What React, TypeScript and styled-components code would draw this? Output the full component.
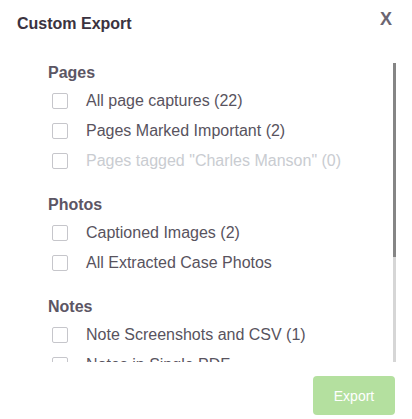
import { useLayoutEffect, useRef, useState } from 'react';
import styled, { createGlobalStyle } from 'styled-components';

interface ExportOption {
  label: string;
  disabled?: boolean;
}

interface ExportGroup {
  title: string;
  options: ExportOption[];
}

const groups: ExportGroup[] = [
  {
    title: 'Pages',
    options: [
      { label: 'All page captures (22)' },
      { label: 'Pages Marked Important (2)' },
      { label: 'Pages tagged "Charles Manson" (0)', disabled: true },
    ],
  },
  {
    title: 'Photos',
    options: [
      { label: 'Captioned Images (2)' },
      { label: 'All Extracted Case Photos' },
    ],
  },
  {
    title: 'Notes',
    options: [
      { label: 'Note Screenshots and CSV (1)' },
      { label: 'Notes in Single PDF' },
    ],
  },
  {
    title: 'Reports',
    options: [
      { label: 'Case Summary PDF' },
      { label: 'Timeline CSV' },
      { label: 'Activity Log' },
    ],
  },
];

function App() {
  const listRef = useRef<HTMLDivElement>(null);
  const [thumb, setThumb] = useState({ top: 0, height: 194 });

  const measure = () => {
    const el = listRef.current;
    if (!el) return;
    const ratio = el.clientHeight / el.scrollHeight;
    setThumb({
      top: el.scrollTop * ratio,
      height: Math.min(el.clientHeight, el.clientHeight * ratio),
    });
  };

  useLayoutEffect(measure, []);

  return (
    <>
      <GlobalStyle />
      <Modal>
        <Header>
          <Title>Custom Export</Title>
          <CloseBtn type='button'>X</CloseBtn>
        </Header>
        <Body>
          <ScrollArea ref={listRef} onScroll={measure}>
            {groups.map((group) => (
              <Group key={group.title}>
                <GroupTitle>{group.title}</GroupTitle>
                {group.options.map((option) => (
                  <OptionRow key={option.label} $disabled={option.disabled}>
                    <CheckBox type='checkbox' disabled={option.disabled} />
                    <span>{option.label}</span>
                  </OptionRow>
                ))}
              </Group>
            ))}
          </ScrollArea>
          <ScrollTrack>
            <ScrollThumb
              style={{ marginTop: thumb.top, height: thumb.height }}
            />
          </ScrollTrack>
        </Body>
        <Footer>
          <ExportBtn type='button'>Export</ExportBtn>
        </Footer>
      </Modal>
    </>
  );
}

const GlobalStyle = createGlobalStyle`
  body {
    margin: 0;
    background: #ffffff;
    font-family: "Liberation Sans", Arial, Helvetica, sans-serif;
  }
`;

const Modal = styled.div`
  width: 412px;
  height: 419px;
  display: flex;
  flex-direction: column;
  background: #ffffff;
  overflow: hidden;
`;

const Header = styled.div`
  height: 62px;
  display: flex;
  align-items: flex-start;
  justify-content: space-between;
  padding: 0 20px 0 17px;
  box-sizing: border-box;
`;

const Title = styled.h2`
  margin: 14px 0 0;
  font-size: 16px;
  line-height: 20px;
  font-weight: 700;
  color: #3b3340;
`;

const CloseBtn = styled.button`
  margin-top: 8px;
  padding: 0;
  border: none;
  background: none;
  font-family: "Liberation Sans", Arial, sans-serif;
  font-size: 18px;
  line-height: 22px;
  font-weight: 700;
  color: #6b6571;
  cursor: pointer;
`;

const Body = styled.div`
  height: 300px;
  display: flex;
  margin-right: 16px;
`;

const ScrollArea = styled.div`
  flex: 1;
  min-width: 0;
  padding: 0 0 14px 48px;
  box-sizing: border-box;
  overflow-y: auto;
  scrollbar-width: none;

  &::-webkit-scrollbar {
    display: none;
  }
`;

const ScrollTrack = styled.div`
  width: 3px;
  margin-top: 1px;
  background: #d6d6d6;
  flex-shrink: 0;
`;

const ScrollThumb = styled.div`
  width: 100%;
  background: #858585;
`;

const Group = styled.div`
  & + & {
    margin-top: 18px;
  }
`;

const GroupTitle = styled.div`
  height: 22px;
  margin-bottom: 2px;
  font-size: 16px;
  line-height: 22px;
  font-weight: 700;
  color: #5c5664;
`;

const OptionRow = styled.label<{ $disabled?: boolean }>`
  height: 30px;
  display: flex;
  align-items: center;
  gap: 18px;
  padding-left: 4px;
  font-size: 16px;
  color: ${(props) => (props.$disabled ? '#c9ccd1' : '#58535e')};
  white-space: nowrap;
`;

const CheckBox = styled.input`
  appearance: none;
  margin: 0;
  width: 16px;
  height: 16px;
  flex-shrink: 0;
  border: 1px solid #c6c6cb;
  border-radius: 2px;
  background: #ffffff;
  box-sizing: border-box;
`;

const Footer = styled.div`
  flex: 1;
  display: flex;
  justify-content: flex-end;
  align-items: flex-start;
  padding: 14px 17px 0 0;
`;

const ExportBtn = styled.button`
  width: 82px;
  height: 39px;
  border: none;
  border-radius: 4px;
  background: #b4e09f;
  color: #ffffff;
  font-family: "Liberation Sans", Arial, sans-serif;
  font-size: 14px;
  cursor: pointer;
`;

export default App;
